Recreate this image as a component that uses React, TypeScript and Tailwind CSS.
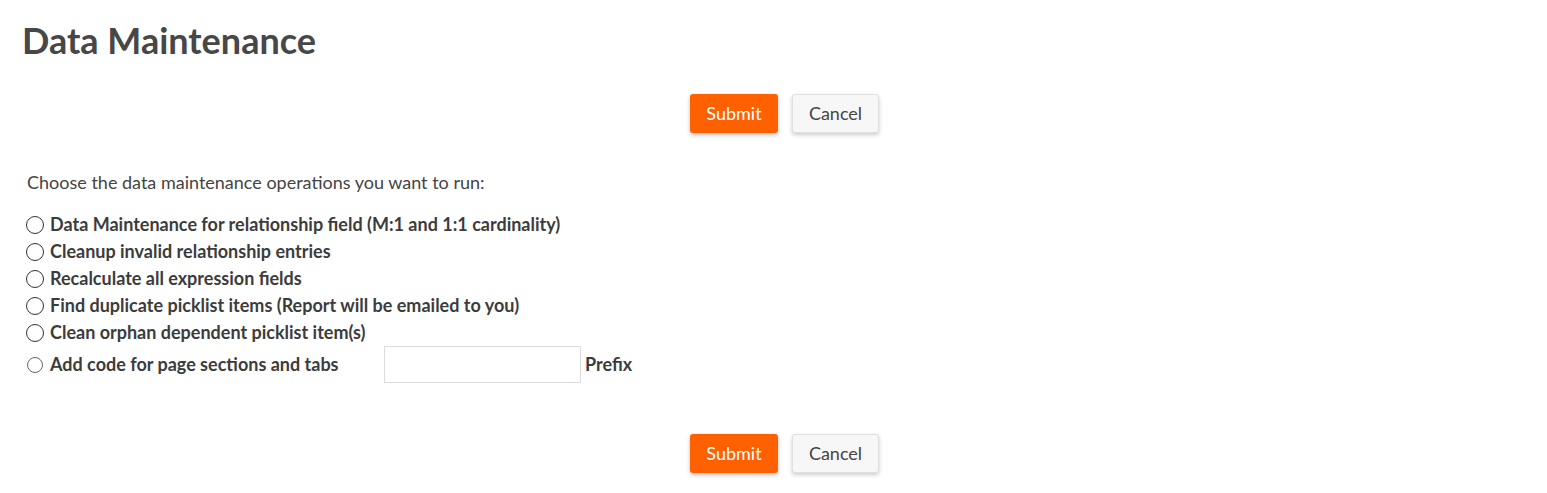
const options = [
  "Data Maintenance for relationship field (M:1 and 1:1 cardinality)",
  "Cleanup invalid relationship entries",
  "Recalculate all expression fields",
  "Find duplicate picklist items (Report will be emailed to you)",
  "Clean orphan dependent picklist item(s)",
];

function Radio({ small }: { small?: boolean }) {
  return small ? (
    <span className="inline-block w-[16px] h-[16px] rounded-full border border-[#666] bg-white shrink-0" />
  ) : (
    <span className="inline-block w-[18px] h-[18px] rounded-full border-[1.5px] border-[#333] bg-white shrink-0" />
  );
}

function Buttons() {
  return (
    <div className="flex justify-center gap-[14px] pl-[22px]">
      <button className="w-[88px] h-[39px] rounded-[3px] bg-[#ff6000] text-white text-[18px] shadow-[0_2px_4px_rgba(0,0,0,0.25)]">
        Submit
      </button>
      <button className="w-[87px] h-[39px] rounded-[3px] bg-[#f7f7f7] border border-[#e0e0e0] text-[#444] text-[18px] shadow-[0_2px_4px_rgba(0,0,0,0.2)]">
        Cancel
      </button>
    </div>
  );
}

export default function App() {
  return (
    <div className="bg-white min-h-[493px] text-[#444] font-['Lato','Noto_Sans',sans-serif]">
      <h1 className="pl-[22px] pt-[18px] text-[36px] leading-[44px] font-bold text-[#474747]">
        Data Maintenance
      </h1>

      <div className="mt-[32px]">
        <Buttons />
      </div>

      <p className="mt-[38px] pl-[27px] text-[18px] leading-[22px]">
        Choose the data maintenance operations you want to run:
      </p>

      <div className="mt-[18px] pl-[26px] flex flex-col">
        {options.map((o) => (
          <label key={o} className="flex items-center gap-[6px] h-[27px]">
            <Radio />
            <span className="text-[18px] font-bold text-[#3c3c3c]">{o}</span>
          </label>
        ))}
        <label className="flex items-center h-[37px]">
          <span className="w-[24px] flex justify-start pl-[1px]">
            <Radio small />
          </span>
          <span className="w-[334px] text-[18px] font-bold text-[#3c3c3c]">
            Add code for page sections and tabs
          </span>
          <input className="w-[197px] h-[37px] border border-[#dcdcdc] bg-white outline-none" />
          <span className="ml-[4px] text-[18px] font-bold text-[#3c3c3c]">Prefix</span>
        </label>
      </div>

      <div className="mt-[51px] pb-[20px]">
        <Buttons />
      </div>
    </div>
  );
}
